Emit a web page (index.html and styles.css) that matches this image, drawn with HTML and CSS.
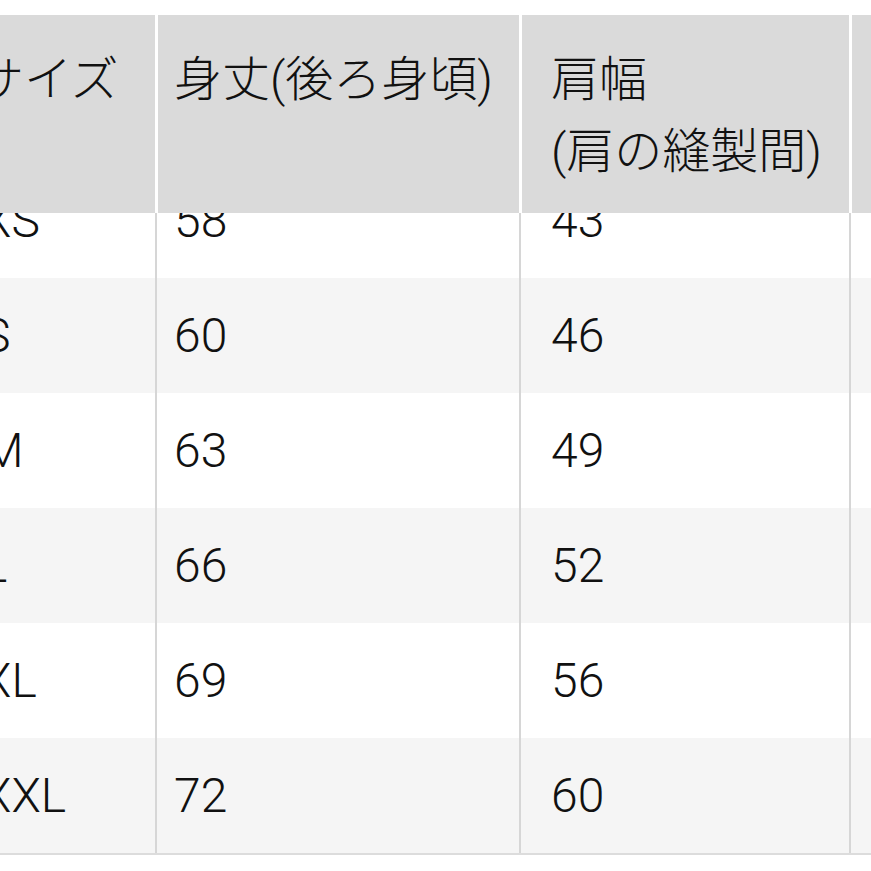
FILE: index.html
```html
<!DOCTYPE html>
<html lang="ja">
<head>
<meta charset="utf-8">
<title>サイズ表</title>
<link rel="stylesheet" href="styles.css">
</head>
<body>
<div class="sheet">
  <div class="row head">
    <div class="cell c1">サイズ</div>
    <div class="cell c2">身丈(後ろ身頃)</div>
    <div class="cell c3">肩幅<br>(肩の縫製間)</div>
    <div class="cell c4"></div>
  </div>
  <div class="body">
    <div class="rows">
      <div class="row"><div class="cell c1">XS</div><div class="cell c2">58</div><div class="cell c3">43</div><div class="cell c4"></div></div>
      <div class="row"><div class="cell c1">S</div><div class="cell c2">60</div><div class="cell c3">46</div><div class="cell c4"></div></div>
      <div class="row"><div class="cell c1">M</div><div class="cell c2">63</div><div class="cell c3">49</div><div class="cell c4"></div></div>
      <div class="row"><div class="cell c1">L</div><div class="cell c2">66</div><div class="cell c3">52</div><div class="cell c4"></div></div>
      <div class="row"><div class="cell c1">XL</div><div class="cell c2">69</div><div class="cell c3">56</div><div class="cell c4"></div></div>
      <div class="row"><div class="cell c1">XXL</div><div class="cell c2">72</div><div class="cell c3">60</div><div class="cell c4"></div></div>
    </div>
  </div>
</div>
</body>
</html>
```
FILE: styles.css
```css
html, body {
  margin: 0;
  padding: 0;
  background: #fff;
  overflow: hidden;
}
body {
  font-family: Roboto, "Noto Sans CJK JP", sans-serif;
  font-size: 48px;
  font-weight: 300;
  color: #111;
}
.sheet {
  width: 911px;
  margin-left: -40px;
  padding-top: 15px;
}
.row {
  display: grid;
  grid-template-columns: 195px 364px 330px 1fr;
}
.cell {
  box-sizing: border-box;
  line-height: 72px;
  white-space: nowrap;
}
.head {
  height: 198px;
  background: #dadada;
}
.head .cell {
  padding-top: 29px;
  border-left: 3px solid #fff;
}
.head .c1 { border-left: 0; padding-left: 16px; }
.head .c2 { padding-left: 16px; }
.head .c3 { padding-left: 29px; }
.body {
  height: 640px;
  overflow: hidden;
  border-bottom: 2px solid #dcdcdc;
}
.rows {
  margin-top: -50px;
}
.rows .row {
  height: 115px;
  background: #fff;
}
.rows .row:nth-child(even) {
  background: #f5f5f5;
}
.rows .cell {
  display: flex;
  align-items: center;
  border-left: 2px solid #d6d6d6;
}
.rows .c1 { border-left: 0; padding-left: 22px; }
.rows .c2 { padding-left: 17px; }
.rows .c3 { padding-left: 30px; }
```
